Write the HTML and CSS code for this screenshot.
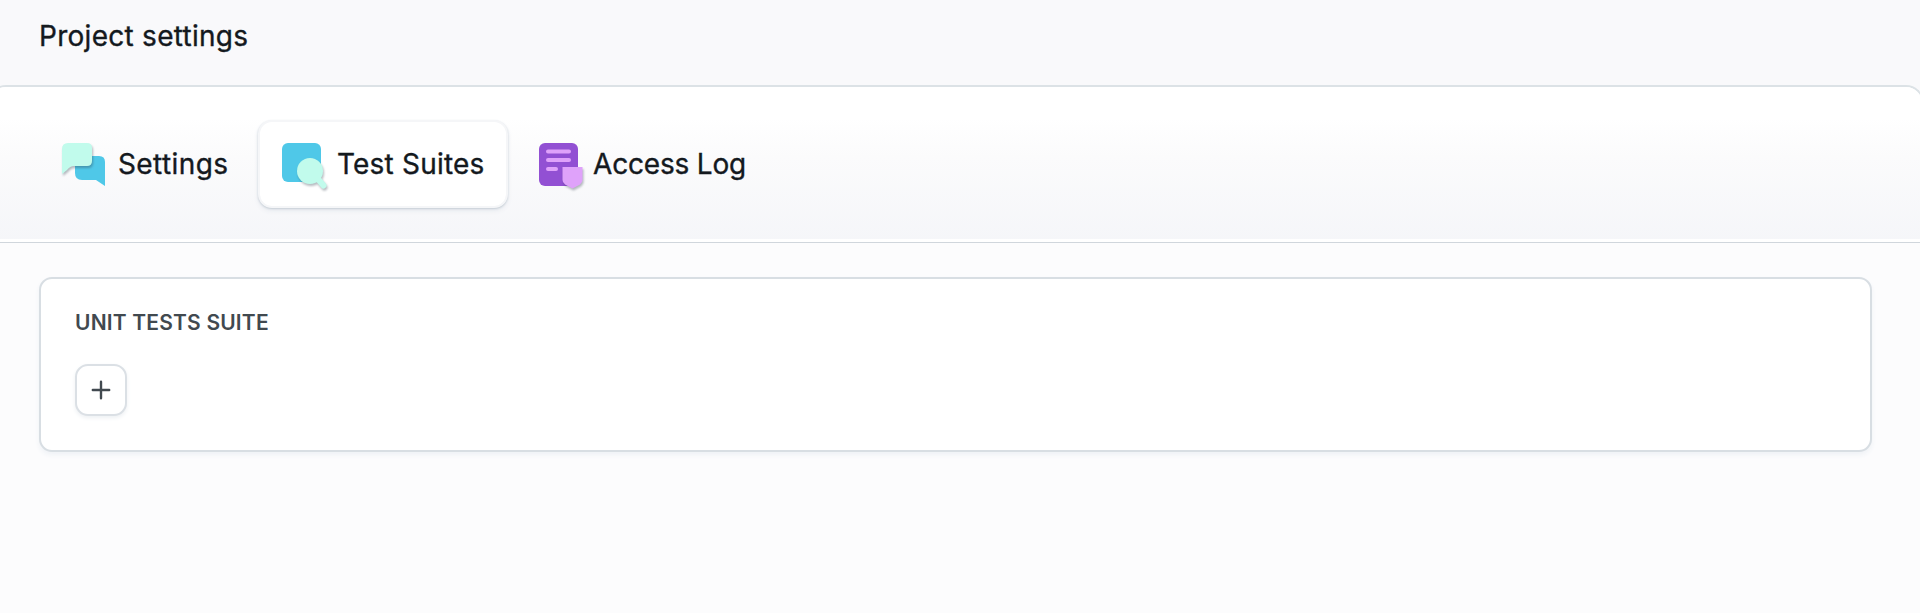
FILE: index.html
```html
<!DOCTYPE html>
<html lang="en">
<head>
<meta charset="utf-8">
<title>Project settings</title>
<link rel="stylesheet" href="styles.css">
</head>
<body>
<header class="header"><h1 class="title">Project settings</h1></header>
<main class="panel">
  <nav class="tabs">
    <a class="tab tab-settings">
      <svg class="icon" viewBox="0 0 48 48">
        <path d="M17 13H37Q43 13 43 19V43L34 37H20Q13 37 13 30V17Q13 13 17 13Z" fill="#4fc8e8"/>
        <path class="lift" d="M6 0H25Q30 0 30 5V18Q30 23 25 23H12Q8 23 5 27L0 31V6Q0 0 6 0Z" fill="#c1fbec"/>
      </svg>
      <span>Settings</span>
    </a>
    <a class="tab active">
      <svg class="icon" viewBox="0 0 48 48">
        <rect width="39" height="39" rx="6" fill="#4fc8e8"/>
        <g class="lift"><path d="M36 36L41.500 42.500" stroke="#c1fbec" stroke-width="6" stroke-linecap="round"/><circle cx="28" cy="28" r="13" fill="#c1fbec"/></g>
      </svg>
      <span>Test Suites</span>
    </a>
    <a class="tab tab-log">
      <svg class="icon" viewBox="0 0 48 48">
        <rect width="39" height="43" rx="6" fill="#9250d3"/>
        <path d="M9 8.500H30M9 17H30M9 26H17" stroke="#dfa2fa" stroke-width="4" stroke-linecap="round"/>
        <path class="lift" d="M23.500 24H43.500V37Q43.500 39.500 41 41.500L33.500 45.500L26 41.500Q23.500 39.500 23.500 37Z" fill="#dfa2fa"/>
      </svg>
      <span>Access Log</span>
    </a>
  </nav>
  <section class="content">
    <div class="card">
      <h2 class="card-title">UNIT TESTS SUITE</h2>
      <button class="add" aria-label="Add">
        <svg class="plus" viewBox="0 0 20 20"><path d="M10 1.800V18.200M1.800 10H18.200"/></svg>
      </button>
    </div>
  </section>
</main>
</body>
</html>
```
FILE: styles.css
```css
* { box-sizing: border-box; }
body {
  margin: 0;
  height: 613px;
  overflow: hidden;
  background: #f9f9fb;
  color: #14191e;
  font-family: Inter, sans-serif;
}
.header {
  height: 85px;
  padding: 19px 39px;
}
.title {
  margin: 0;
  font-size: 28px;
  line-height: 34px;
  font-weight: 400;
  letter-spacing: .28px;
  -webkit-text-stroke: .35px;
}
.panel {
  height: 528px;
  margin: 0 -4px 0 -12px;
  border: 2px solid #dce2e6;
  border-bottom: 0;
  border-radius: 18px 18px 0 0;
  background: #fcfcfd;
  overflow: hidden;
}
.tabs {
  display: flex;
  height: 156px;
  padding: 33px 0 0 50px;
  border-bottom: 1px solid #d0d6dc;
  background: linear-gradient(#fff 20%, #fbfbfc 45%, #f5f6f9 100%);
  box-shadow: inset 0 -3px #fff;
}
.tab {
  display: flex;
  height: 88px;
  padding: 22px 22px 0;
  border: 1px solid transparent;
  border-radius: 14px;
  font-size: 28px;
  line-height: 42px;
  letter-spacing: .4px;
  -webkit-text-stroke: .35px;
  white-space: nowrap;
}
.tab-settings { width: 218px; padding-left: 21px; }
.active {
  width: 250px;
  padding: 21px 0 0 22px;
  border: 2px solid #f5f6f8;
  background: #fff;
  background-clip: padding-box;
  box-shadow: 0 1px 2px #c6ced6, 0 3px 5px #e8ebf0;
  letter-spacing: .2px;
}
.tab-log { padding-left: 30px; letter-spacing: -.18px; }
.icon {
  width: 48px;
  height: 48px;
  margin-right: 7px;
  flex: none;
  overflow: visible;
}
.tab-settings .icon { margin-right: 8px; }
.tab-log .icon { margin-right: 6px; }
.lift { filter: drop-shadow(1px 2px 1px rgba(45, 60, 75, .35)); }
.content { padding: 34px 50px 0 49px; }
.card {
  height: 175px;
  padding: 31px 34px;
  border: 2px solid #d8dee3;
  border-radius: 13px;
  background: #fff;
  box-shadow: 0 3px 5px #eff2f6;
}
.card-title {
  margin: 0;
  color: #41494f;
  font-size: 21px;
  line-height: 26px;
  font-weight: 600;
  letter-spacing: .18px;
}
.add {
  display: flex;
  align-items: center;
  justify-content: center;
  width: 52px;
  height: 52px;
  margin-top: 28px;
  padding: 0;
  border: 2px solid #dbe0e5;
  border-radius: 13px;
  background: #fff;
  box-shadow: 0 2px 4px #edf0f3;
}
.plus {
  width: 20px;
  height: 20px;
  fill: none;
  stroke: #41494f;
  stroke-width: 2.400;
  stroke-linecap: round;
}
```
